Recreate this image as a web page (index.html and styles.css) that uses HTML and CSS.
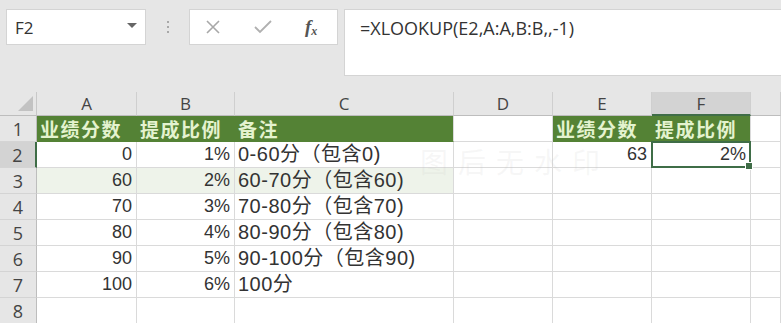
FILE: index.html
```html
<!DOCTYPE html>
<html lang="zh-CN">
<head>
    <meta charset="UTF-8">
    <title>XLOOKUP 提成比例</title>
    <link rel="stylesheet" href="styles.css">
</head>
<body>

    <div class="toolbar">
        <div class="namebox">
            <span>F2</span>
            <span class="caret"></span>
        </div>
        <div class="grip"><i></i><i></i><i></i></div>
        <div class="fbtns">
            <svg width="18" height="14" viewBox="0 0 18 14"><path d="M3 1 L15 13 M15 1 L3 13" stroke="#a8a8a8" stroke-width="1.6" fill="none"/></svg>
            <svg width="20" height="14" viewBox="0 0 20 14"><path d="M2 7 L7 12 L18 1" stroke="#b0b0b0" stroke-width="1.8" fill="none"/></svg>
            <span class="fx">f<sub>x</sub></span>
        </div>
        <div class="formula">=XLOOKUP(E2,A:A,B:B,,-1)</div>
    </div>

    <div class="sheet">
        <div class="corner"><span class="tri"></span></div>
        <div class="colhead">A</div>
        <div class="colhead">B</div>
        <div class="colhead">C</div>
        <div class="colhead">D</div>
        <div class="colhead">E</div>
        <div class="colhead active">F</div>
        <div class="colhead"></div>

        <div class="rowhead">1</div>
        <div class="cell head">业绩分数</div>
        <div class="cell head">提成比例</div>
        <div class="cell head end">备注</div>
        <div class="cell"></div>
        <div class="cell head">业绩分数</div>
        <div class="cell head end">提成比例</div>
        <div class="cell"></div>

        <div class="rowhead active">2</div>
        <div class="cell num">0</div>
        <div class="cell num">1%</div>
        <div class="cell note">0-60分（包含0)</div>
        <div class="cell"></div>
        <div class="cell num">63</div>
        <div class="cell num selected">2%<span class="handle"></span></div>
        <div class="cell"></div>

        <div class="rowhead">3</div>
        <div class="cell num tint">60</div>
        <div class="cell num tint">2%</div>
        <div class="cell note tint">60-70分（包含60)</div>
        <div class="cell"></div>
        <div class="cell"></div>
        <div class="cell"></div>
        <div class="cell"></div>

        <div class="rowhead">4</div>
        <div class="cell num">70</div>
        <div class="cell num">3%</div>
        <div class="cell note">70-80分（包含70)</div>
        <div class="cell"></div>
        <div class="cell"></div>
        <div class="cell"></div>
        <div class="cell"></div>

        <div class="rowhead">5</div>
        <div class="cell num">80</div>
        <div class="cell num">4%</div>
        <div class="cell note">80-90分（包含80)</div>
        <div class="cell"></div>
        <div class="cell"></div>
        <div class="cell"></div>
        <div class="cell"></div>

        <div class="rowhead">6</div>
        <div class="cell num">90</div>
        <div class="cell num">5%</div>
        <div class="cell note">90-100分（包含90)</div>
        <div class="cell"></div>
        <div class="cell"></div>
        <div class="cell"></div>
        <div class="cell"></div>

        <div class="rowhead">7</div>
        <div class="cell num">100</div>
        <div class="cell num">6%</div>
        <div class="cell note">100分</div>
        <div class="cell"></div>
        <div class="cell"></div>
        <div class="cell"></div>
        <div class="cell"></div>

        <div class="rowhead">8</div>
        <div class="cell"></div>
        <div class="cell"></div>
        <div class="cell"></div>
        <div class="cell"></div>
        <div class="cell"></div>
        <div class="cell"></div>
        <div class="cell"></div>

        <div class="watermark">图后无水印</div>
    </div>

</body>
</html>
```

FILE: styles.css
```css
body {
    margin: 0;
    width: 781px;
    height: 323px;
    overflow: hidden;
    background-color: #fff;
    font-family: 'Liberation Sans', 'Noto Sans CJK SC', sans-serif;
    color: #333;
}

/* barre de formule */
.toolbar {
    height: 92px;
    box-sizing: border-box;
    padding: 9px 0 0 6px;
    background-color: #e6e6e6;
    display: flex;
    align-items: flex-start;
}

.namebox {
    width: 140px;
    height: 36px;
    box-sizing: border-box;
    background-color: #fff;
    border: 1px solid #d4d4d4;
    display: flex;
    align-items: center;
    justify-content: space-between;
    padding: 0 8px 0 8px;
    font-family: 'Open Sans', sans-serif;
    font-size: 17px;
    color: #333;
}

.caret {
    width: 0;
    height: 0;
    border-left: 5px solid transparent;
    border-right: 5px solid transparent;
    border-top: 5px solid #666;
    margin-top: -3px;
}

.grip {
    width: 43px;
    height: 36px;
    display: flex;
    flex-direction: column;
    align-items: center;
    justify-content: center;
    gap: 3px;
}

.grip i {
    width: 2px;
    height: 2px;
    background-color: #a8a8a8;
}

.fbtns {
    width: 149px;
    height: 36px;
    box-sizing: border-box;
    background-color: #fff;
    border: 1px solid #d4d4d4;
    display: flex;
    align-items: center;
    padding: 0 0 0 14px;
    gap: 31px;
}

.fx {
    font-family: 'Liberation Serif', serif;
    font-style: italic;
    font-weight: bold;
    font-size: 19px;
    color: #555;
    margin-left: 1px;
}

.fx sub {
    font-size: 12px;
    vertical-align: -2px;
}

.formula {
    flex: 1;
    height: 67px;
    margin-left: 6px;
    box-sizing: border-box;
    background-color: #fff;
    border: 1px solid #d4d4d4;
    border-right: none;
    padding: 6px 0 0 15px;
    font-family: 'Open Sans', sans-serif;
    font-size: 18px;
    color: #333;
}

/* feuille */
.sheet {
    position: relative;
    display: grid;
    grid-template-columns: 37px 100px 98px 219px 99px 99px 99px 1fr;
    grid-template-rows: 24px repeat(8, 26px);
}

.corner, .colhead, .rowhead {
    background-color: #e6e6e6;
    box-sizing: border-box;
    color: #444;
}

.corner {
    border-right: 1px solid #c8c8c8;
    border-bottom: 1px solid #bdbdbd;
    position: relative;
}

.tri {
    position: absolute;
    right: 3px;
    bottom: 4px;
    width: 0;
    height: 0;
    border-left: 15px solid transparent;
    border-bottom: 15px solid #c2c2c2;
}

.colhead {
    border-right: 1px solid #cfcfcf;
    border-bottom: 1px solid #bdbdbd;
    text-align: center;
    font-family: 'Open Sans', sans-serif;
    font-size: 17px;
    line-height: 24px;
}

.colhead.active {
    background-color: #d3d3d3;
    border-bottom: 2px solid #3f6d47;
}

.rowhead {
    border-right: 1px solid #bdbdbd;
    border-bottom: 1px solid #d4d4d4;
    text-align: center;
    font-family: 'Open Sans', sans-serif;
    font-size: 18px;
    line-height: 26px;
}

.rowhead.active {
    background-color: #d3d3d3;
    border-right: 2px solid #3f6d47;
}

.cell {
    box-sizing: border-box;
    border-right: 1px solid #dadada;
    border-bottom: 1px solid #dadada;
    font-size: 18px;
    line-height: 25px;
    padding: 0 3px;
    white-space: nowrap;
    color: #333;
}

.cell.note {
    font-size: 20px;
    letter-spacing: 0.5px;
}

.cell.num {
    text-align: right;
    padding-right: 4px;
}

.cell.tint {
    background-color: #eef3ea;
}

.cell.head {
    background-color: #548235;
    border-right-color: #548235;
    border-bottom-color: #548235;
    color: #e4f3cf;
    font-family: 'Noto Sans CJK SC', sans-serif;
    font-weight: bold;
    font-size: 19px;
    letter-spacing: 1.5px;
    line-height: 25px;
}

.cell.head.end {
    border-right-color: #dadada;
}

.cell.selected {
    position: relative;
    border: 2px solid #3f6d47;
    margin: -1px 0 0 -1px;
    line-height: 23px;
    padding-right: 3px;
}

.handle {
    position: absolute;
    right: -4px;
    bottom: -4px;
    width: 6px;
    height: 6px;
    background-color: #3f6d47;
    border: 1px solid #fff;
}

.watermark {
    position: absolute;
    left: 420px;
    top: 49px;
    font-family: 'Noto Sans CJK SC', sans-serif;
    font-size: 28px;
    letter-spacing: 10px;
    color: rgba(190, 190, 190, 0.12);
    pointer-events: none;
}
```
